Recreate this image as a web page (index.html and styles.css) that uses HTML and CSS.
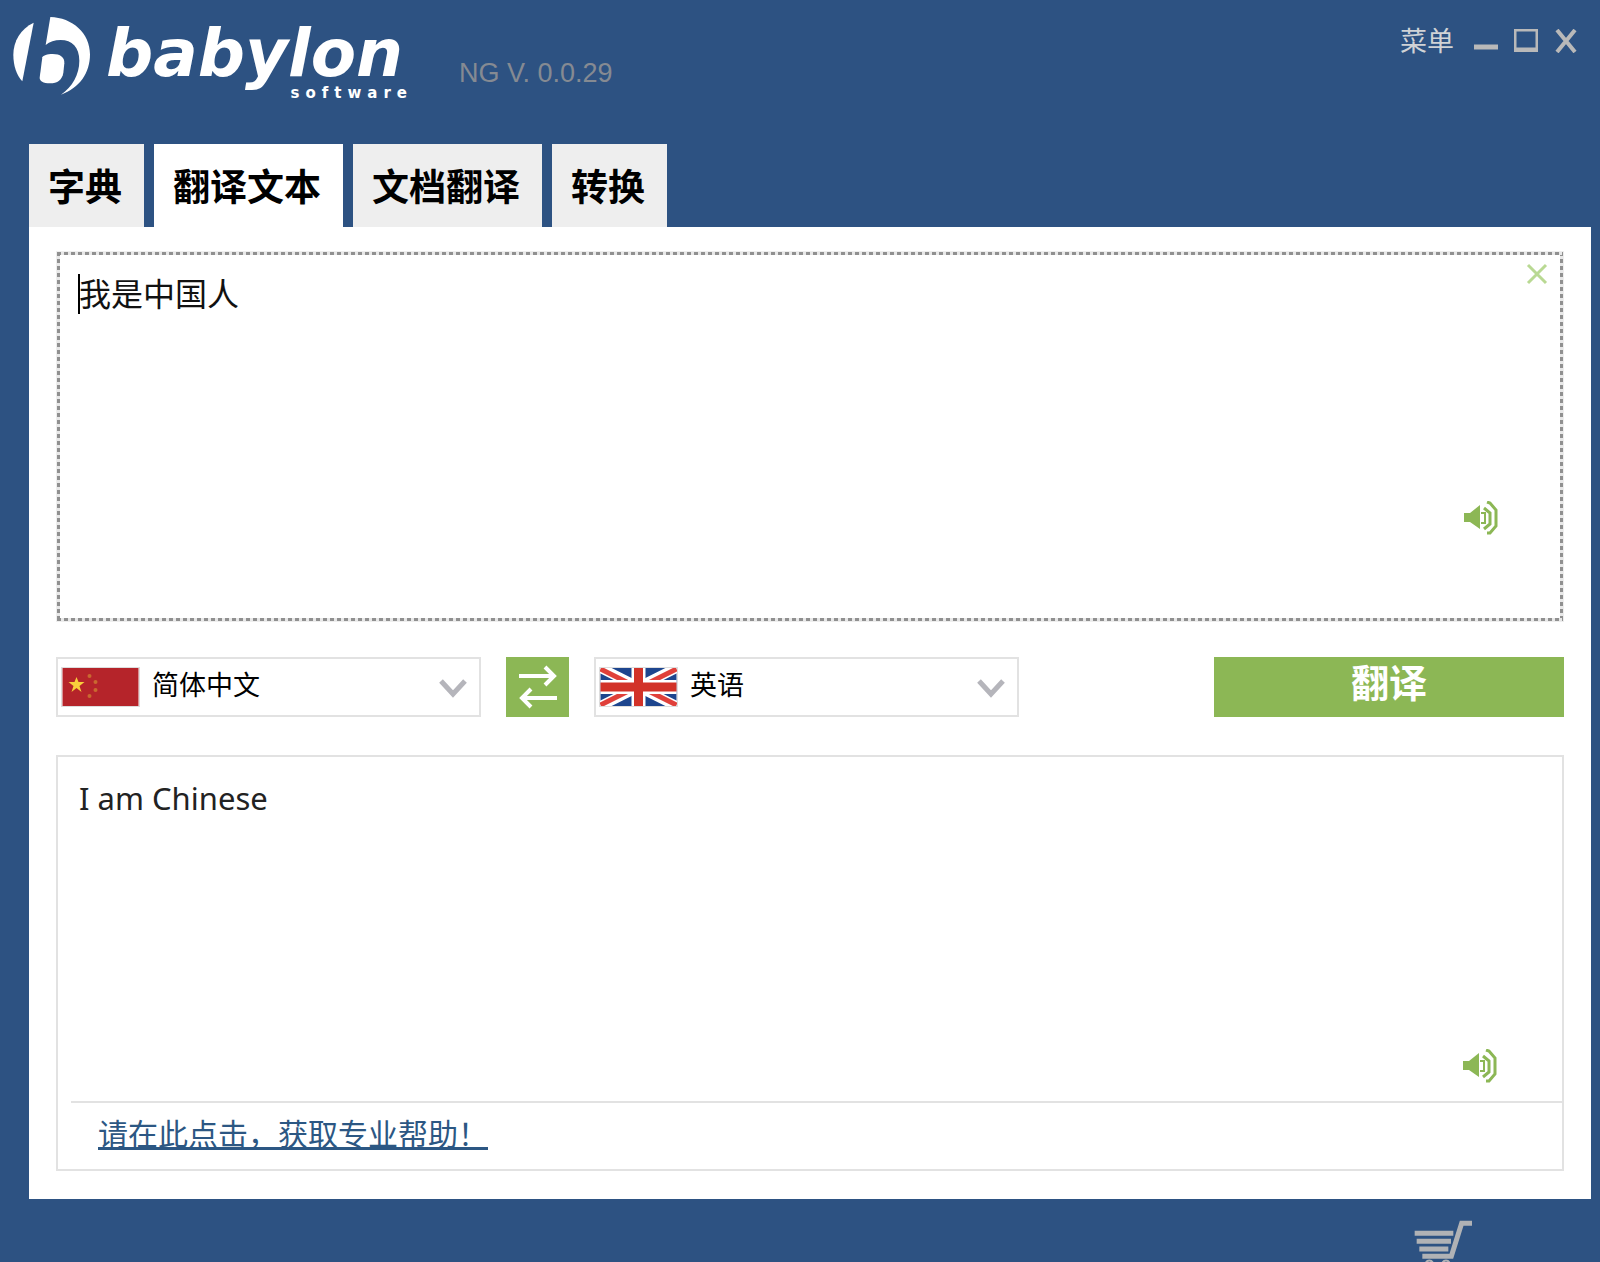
FILE: index.html
```html
<!DOCTYPE html>
<html lang="zh-CN">
<head>
<meta charset="utf-8">
<meta name="viewport" content="width=device-width, initial-scale=1">
<title>Babylon</title>
<link rel="stylesheet" href="styles.css">
</head>
<body>
<div class="app">
  <header class="header">
    <div class="brand">
      <svg class="brand-mark" viewBox="36 48 240 240" aria-hidden="true">
        <path d="M101 68C62 86 40 124 40 164c0 34 10 61 27 80z"/>
        <path d="M151 51c66 2 119 48 119 112 0 56-31 101-87 121 34-24 55-60 55-102 0-40-22-62-56-62-18 0-33 5-45 15z"/>
        <path d="M158 162c23 0 36 10 35 28l-3 28c-3 21-18 32-40 32-21 0-31-7-31-17l8-61c3-6 14-10 31-10z"/>
      </svg>
      <div class="brand-text">
        <span class="brand-name">babylon</span>
        <span class="brand-sub">software</span>
      </div>
    </div>
    <span class="version">NG V. 0.0.29</span>
    <div class="window-controls">
      <button class="control menu" type="button">菜单</button>
      <button class="control" type="button" aria-label="最小化">
        <svg width="24" height="24" viewBox="0 0 24 24"><path d="M0 18h24" stroke="currentColor" stroke-width="5"/></svg>
      </button>
      <button class="control" type="button" aria-label="最大化">
        <svg width="24" height="24" viewBox="0 0 24 24"><path d="M1 1h22v19H1z" fill="none" stroke="currentColor" stroke-width="3"/><path d="M0 21h24" stroke="currentColor" stroke-width="4"/></svg>
      </button>
      <button class="control" type="button" aria-label="关闭">
        <svg width="24" height="24" viewBox="0 0 24 24"><path d="M3 1l18 22M21 1L3 23" stroke="currentColor" stroke-width="4"/></svg>
      </button>
    </div>
  </header>

  <nav class="tabs">
    <button class="tab" type="button">字典</button>
    <button class="tab active" type="button">翻译文本</button>
    <button class="tab" type="button">文档翻译</button>
    <button class="tab" type="button">转换</button>
  </nav>

  <main class="panel">
    <div class="source">
      <textarea class="source-text" aria-label="原文" spellcheck="false">我是中国人</textarea>
      <span class="caret"></span>
      <button class="clear" type="button" aria-label="清除">
        <svg width="22" height="22" viewBox="0 0 22 22"><path d="M2 2l18 18M20 2L2 20" stroke="currentColor" stroke-width="3"/></svg>
      </button>
      <button class="speak" type="button" aria-label="朗读原文">
        <svg width="34" height="34" viewBox="0 0 34 34"><path d="M0 12h6l10-8v24l-10-7H0z" fill="currentColor"/><g fill="none" stroke="currentColor"><path d="M17 12h4v10h-4" stroke-width="2"/><path d="M20 7l6 5v11l-6 5" stroke-width="3"/><path d="M23 1l3 1 6 7v16l-6 7-3 0" stroke-width="3"/></g></svg>
      </button>
    </div>

    <div class="toolbar">
      <div class="language">
        <svg class="flag" viewBox="0 0 76 38" aria-hidden="true"><path fill="#b5242a" d="M0 0h76v38H0z"/><path fill="#f8cf3c" d="M14 9l2 5h6l-5 4 2 6-5-4-5 4 2-6-5-4h6z"/><g fill="#c9692f"><circle cx="27" cy="8" r="2"/><circle cx="33" cy="14" r="2"/><circle cx="33" cy="22" r="2"/><circle cx="27" cy="28" r="2"/></g></svg>
        <select class="select" aria-label="源语言"><option>简体中文</option><option>英语</option></select>
        <svg class="chevron" viewBox="0 0 28 20" aria-hidden="true"><path d="M2 2l12 13L26 2" fill="none" stroke="#b5b5bb" stroke-width="5"/></svg>
      </div>
      <button class="swap" type="button" aria-label="交换语言">
        <svg width="40" height="44" viewBox="0 0 40 44" fill="none" stroke="#fff" stroke-width="4"><path d="M1 11h36M27 2l9 9-9 9M39 33H3M13 24l-9 9 9 9"/></svg>
      </button>
      <div class="language">
        <svg class="flag" viewBox="0 0 76 38" aria-hidden="true"><path fill="#1d458e" d="M0 0h76v38H0z"/><path d="M0 0l76 38M76 0L0 38" stroke="#fff" stroke-width="10"/><path d="M0 1l38 19M76 1L38 20M0 37l38-19M76 37L38 18" stroke="#e0403a" stroke-width="5"/><path d="M38 0v38M0 19h76" stroke="#fff" stroke-width="14"/><path d="M38 0v38M0 19h76" stroke="#d23228" stroke-width="9"/></svg>
        <select class="select" aria-label="目标语言"><option>英语</option><option>简体中文</option></select>
        <svg class="chevron" viewBox="0 0 28 20" aria-hidden="true"><path d="M2 2l12 13L26 2" fill="none" stroke="#b5b5bb" stroke-width="5"/></svg>
      </div>
      <button class="translate" type="button">翻译</button>
    </div>

    <section class="result">
      <p class="result-text">I am Chinese</p>
      <button class="speak" type="button" aria-label="朗读译文">
        <svg width="34" height="34" viewBox="0 0 34 34"><path d="M0 12h6l10-8v24l-10-7H0z" fill="currentColor"/><g fill="none" stroke="currentColor"><path d="M17 12h4v10h-4" stroke-width="2"/><path d="M20 7l6 5v11l-6 5" stroke-width="3"/><path d="M23 1l3 1 6 7v16l-6 7-3 0" stroke-width="3"/></g></svg>
      </button>
      <div class="help"><a class="help-link" href="#help">请在此点击，获取专业帮助！</a></div>
    </section>
  </main>

  <footer class="footer">
    <button class="cart" type="button" aria-label="购物车">
      <svg width="60" height="42" viewBox="100 570 180 126" fill="none" stroke="currentColor"><path d="M102 610h116M108 634h103M116 657h87" stroke-width="15"/><path d="M125 679h87l31-99h31" stroke-width="15"/><path d="M136 697a12 12 0 0 1 20 0M186 697a12 12 0 0 1 20 0" stroke-width="6"/></svg>
    </button>
  </footer>
</div>
</body>
</html>
```
FILE: styles.css
```css
* {
  box-sizing: border-box;
}

body {
  margin: 0;
  background: #2d5282;
  font-family: "Liberation Sans", "Noto Sans CJK SC", sans-serif;
  color: #000;
}

button {
  margin: 0;
  padding: 0;
  border: 0;
  background: none;
  color: inherit;
  font: inherit;
  cursor: pointer;
}

svg {
  display: block;
}

.app {
  display: flex;
  flex-direction: column;
  min-height: 100vh;
}

.header {
  display: flex;
  align-items: flex-start;
  height: 144px;
  padding: 16px 22px 0 12px;
}

.brand {
  display: flex;
  gap: 14px;
  width: 395px;
  color: #fff;
}

.brand-mark {
  flex: none;
  width: 80px;
  height: 80px;
  fill: currentColor;
}

.brand-text {
  display: flex;
  flex: 1;
  flex-direction: column;
  padding-top: 7px;
  font-family: "DejaVu Sans", sans-serif;
  font-weight: 700;
}

.brand-name {
  font-size: 66px;
  font-style: italic;
  line-height: 62px;
}

.brand-sub {
  align-self: flex-end;
  font-size: 15px;
  line-height: 16px;
  letter-spacing: 6px;
  margin-right: -6px;
}

.version {
  margin: 41px 0 0 52px;
  font-size: 27px;
  line-height: 32px;
  color: #858a92;
}

.window-controls {
  display: flex;
  align-items: center;
  gap: 16px;
  margin-left: auto;
  padding-top: 6px;
  color: #b9b9b9;
}

.menu {
  margin-right: 4px;
  padding-top: 3px;
  font-size: 27px;
  line-height: 35px;
  color: #d0d3d6;
}

.tabs {
  display: flex;
  gap: 10px;
  padding-left: 29px;
}

.tab {
  padding: 6px 22px 0 19px;
  background: #eee;
  font-size: 37px;
  font-weight: 700;
  line-height: 77px;
}

.tab.active {
  background: #fff;
}

.panel {
  display: flex;
  flex: 1;
  flex-direction: column;
  margin: 0 9px 0 29px;
  padding: 24px 27px 28px;
  background: #fff;
}

.source {
  --dots: #909090 0 4px, #e8e8e8 4px 7px;
  position: relative;
  display: flex;
  flex: 1 0 371px;
  border: 1px solid #eee;
  padding: 3px;
  background:
    repeating-linear-gradient(90deg, var(--dots)) top / 100% 3px no-repeat,
    repeating-linear-gradient(90deg, var(--dots)) bottom / 100% 3px no-repeat,
    repeating-linear-gradient(var(--dots)) left / 3px 100% no-repeat,
    repeating-linear-gradient(var(--dots)) right / 3px 100% no-repeat;
}

.source-text {
  flex: 1;
  padding: 16px 80px 16px 19px;
  border: 0;
  outline: 0;
  resize: none;
  background: #fff;
  color: #111;
  font: 32px/42px "Noto Sans CJK SC", sans-serif;
}

.caret {
  position: absolute;
  top: 22px;
  left: 21px;
  width: 2px;
  height: 40px;
  background: #000;
}

.clear {
  position: absolute;
  top: 11px;
  right: 15px;
  color: #b9d993;
}

.speak {
  position: absolute;
  right: 65px;
  bottom: 86px;
  color: #8cb755;
}

.toolbar {
  display: flex;
  gap: 25px;
  padding: 35px 0 38px;
}

.language {
  position: relative;
  flex: 0 1 425px;
}

.select {
  width: 100%;
  height: 60px;
  padding: 0 60px 6px 94px;
  border: 2px solid #e2e2e2;
  border-radius: 0;
  appearance: none;
  background: #fff;
  color: #000;
  font: 27px/38px "Noto Sans CJK SC", sans-serif;
}

.flag {
  position: absolute;
  top: 11px;
  left: 6px;
  width: 77px;
  height: 38px;
  outline: 1px solid #ddd;
}

.chevron {
  position: absolute;
  top: 22px;
  right: 14px;
  width: 28px;
  height: 20px;
}

.swap {
  display: grid;
  flex: 0 0 63px;
  place-items: center;
  background: #8cb755;
}

.translate {
  flex: 0 1 350px;
  margin-left: auto;
  padding-bottom: 5px;
  background: #8cb755;
  color: #fff;
  font-size: 38px;
  font-weight: 700;
  line-height: 55px;
}

.result {
  position: relative;
  display: flex;
  flex: 1 0 416px;
  flex-direction: column;
  justify-content: space-between;
  border: 2px solid #e2e2e2;
}

.result-text {
  margin: 0;
  padding: 20px 21px 0;
  color: #222;
  font: 31px/42px "Noto Sans", sans-serif;
}

.help {
  margin-left: 13px;
  padding: 11px 27px 13px;
  border-top: 2px solid #e2e2e2;
}

.help-link {
  color: #2c5783;
  font-size: 30px;
  line-height: 42px;
  text-underline-offset: 2px;
  text-decoration-thickness: 3px;
  text-decoration-skip-ink: none;
}

.footer {
  display: flex;
  justify-content: flex-end;
  padding: 21px 126px 0 0;
}

.cart {
  color: #b0b2b5;
}
```
